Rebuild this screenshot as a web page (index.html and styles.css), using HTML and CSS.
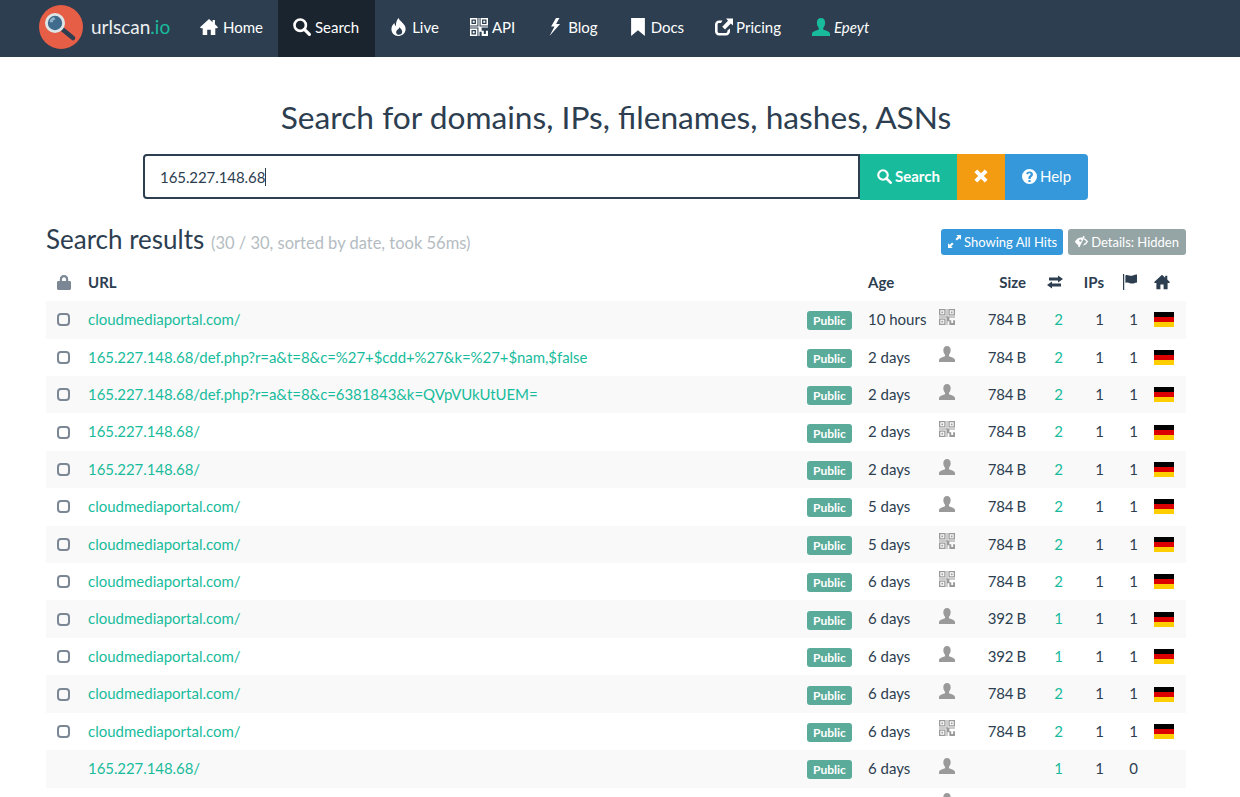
FILE: index.html
```html
<!DOCTYPE html>
<html lang="en">
<head>
  <meta charset="UTF-8">
  <meta name="viewport" content="width=device-width, initial-scale=1.0">
  <link rel="stylesheet" href="styles.css">
  <title>urlscan.io - Search</title>
</head>
<body>

  <svg class="sprite" xmlns="http://www.w3.org/2000/svg">
    <symbol id="i-home" viewBox="0 0 20 18"><path d="M10 0 L14 3.6 V1.2 H16.6 V6 L20 9.2 L19 10.4 H17 V18 H12 V12 H8 V18 H3 V10.4 H1 L0 9.2 Z"/></symbol>
    <symbol id="i-search" viewBox="0 0 18 18"><circle cx="7.2" cy="7.2" r="5.7" fill="none" stroke="currentColor" stroke-width="2.6"/><path d="M11.4 11.4 L16.4 16.4" fill="none" stroke="currentColor" stroke-width="3.2" stroke-linecap="round"/></symbol>
    <symbol id="i-fire" viewBox="0 0 16 19"><path fill-rule="evenodd" d="M7.5 0 C8.5 3 12 4.5 14 8 C16.5 12.5 14 18 8.5 19 C3.5 19.3 0 16 0 11.8 C0 9 1.6 7 3.2 5.4 C3.3 7 3.8 8 4.8 8.6 C4.6 5 5.6 2.2 7.5 0 Z M8.4 9.6 C8.6 11.4 5 12.6 5 15 C5 16.8 6.5 17.8 8 17.8 C10 17.8 11.4 16.4 11.4 14.6 C11.4 12.6 9.6 11.4 8.4 9.6 Z"/></symbol>
    <symbol id="i-qr" viewBox="0 0 17 17"><path fill-rule="evenodd" d="M0 0 H7 V7 H0 Z M1.4 1.4 V5.6 H5.6 V1.4 Z M2.6 2.6 H4.4 V4.4 H2.6 Z M10 0 H17 V7 H10 Z M11.4 1.4 V5.6 H15.6 V1.4 Z M12.6 2.6 H14.4 V4.4 H12.6 Z M0 10 H7 V17 H0 Z M1.4 11.4 V15.6 H5.6 V11.4 Z M2.6 12.6 H4.4 V14.4 H2.6 Z M8 0 H9 V8 H0 V9 H8 V17 H9 V13 H11 V17 H17 V12 H15 V15 H13 V12 H11 V9 H17 V8 H8 Z"/></symbol>
    <symbol id="i-bolt" viewBox="0 0 11 18"><path d="M6.5 0 L1.6 8.4 H5 L0 18 L10.6 6 H6.6 L10 0 Z"/></symbol>
    <symbol id="i-bookmark" viewBox="0 0 13 17"><path d="M0 0 H13 V17 L6.5 11.6 L0 17 Z"/></symbol>
    <symbol id="i-share" viewBox="0 0 18 17"><path d="M7.5 2 H4 C1.8 2 0 3.8 0 6 V13 C0 15.2 1.8 17 4 17 H11 C13.2 17 15 15.2 15 13 V10 L12.4 12 V13 C12.4 13.8 11.8 14.4 11 14.4 H4 C3.2 14.4 2.6 13.8 2.6 13 V6 C2.6 5.2 3.2 4.6 4 4.6 H6 Z"/><path d="M11 0 H18 V7 L15.8 5 L10 11 L7.2 8.2 L13 2.2 Z"/></symbol>
    <symbol id="i-user" viewBox="0 0 17 17"><path d="M8.5 0 C11 0 12.4 1.8 12.4 4.4 C12.4 6.6 11.4 8.4 10.6 9.4 V10.8 C13 11.8 17 12.6 17 15 V17 H0 V15 C0 12.6 4 11.8 6.4 10.8 V9.4 C5.6 8.4 4.6 6.6 4.6 4.4 C4.6 1.8 6 0 8.5 0 Z"/></symbol>
    <symbol id="i-times" viewBox="0 0 13 13"><path d="M3 0.4 L6.5 3.9 L10 0.4 L12.6 3 L9.1 6.5 L12.6 10 L10 12.6 L6.5 9.1 L3 12.6 L0.4 10 L3.9 6.5 L0.4 3 Z"/></symbol>
    <symbol id="i-help" viewBox="0 0 15 15"><path fill-rule="evenodd" d="M7.5 0 A7.5 7.5 0 1 1 7.5 15 A7.5 7.5 0 1 1 7.5 0 Z M6.4 11 V13 H8.6 V11 Z M7.6 2.4 C5.8 2.4 4.6 3.3 4.1 4.6 L5.8 5.4 C6.1 4.7 6.6 4.3 7.4 4.3 C8.2 4.3 8.7 4.7 8.7 5.2 C8.7 6.4 6.4 6.6 6.4 8.8 V10 H8.6 V9.2 C8.6 8.2 11 7.6 11 5.2 C11 3.5 9.4 2.4 7.6 2.4 Z"/></symbol>
    <symbol id="i-expand" viewBox="0 0 14 14"><path d="M9 0 H14 V5 L12.2 3.4 L9.6 6 L8 4.4 L10.6 1.8 Z M5 14 H0 V9 L1.8 10.6 L4.4 8 L6 9.6 L3.4 12.2 Z"/></symbol>
    <symbol id="i-eye" viewBox="0 0 16 14"><path fill-rule="evenodd" d="M10.2 0 L12 1 L5.4 14 L3.6 13 L4.3 11.6 C2.4 10.6 0.9 9 0 7 C1.6 4 4.6 2 8 2 C8.5 2 9 2 9.4 2.1 Z M6.6 4.4 A1.5 1.5 0 1 0 6.6 7.4 A1.5 1.5 0 1 0 6.6 4.4 Z M11.6 2.9 C13.4 3.8 15 5.2 16 7 C14.8 9.6 12.6 11.4 10 11.9 L10.9 10 C12.2 9.4 13.2 8.2 14 7 C13.2 5.8 12 4.8 10.8 4.4 Z"/></symbol>
    <symbol id="i-lock" viewBox="0 0 14 15"><path fill-rule="evenodd" d="M7 0 C9.6 0 11.2 1.8 11.2 4.2 V6 H12.6 C13.4 6 14 6.6 14 7.4 V13.6 C14 14.4 13.4 15 12.6 15 H1.4 C0.6 15 0 14.4 0 13.6 V7.4 C0 6.6 0.6 6 1.4 6 H2.8 V4.2 C2.8 1.8 4.4 0 7 0 Z M7 2.2 C5.6 2.2 5 3.2 5 4.4 V6 H9 V4.4 C9 3.2 8.4 2.2 7 2.2 Z"/></symbol>
    <symbol id="i-exchange" viewBox="0 0 16 13"><path d="M2 2 H11 V0 L16 3.5 L11 7 V5 H2 Z M14 8 H5 V6 L0 9.5 L5 13 V11 H14 Z"/></symbol>
    <symbol id="i-flag" viewBox="0 0 14 16"><path d="M0 0 H1.2 V16 H0 Z M2.4 1.4 C5 0 7 2.8 10 1.4 C11.4 0.8 13 0.4 14 0.4 V8.4 C11.4 8.6 10 10 7.6 9.4 C5.6 8.8 4 8 2.4 9 Z"/></symbol>
    <symbol id="i-de" viewBox="0 0 20 15"><rect width="20" height="5" y="0" fill="#000"/><rect width="20" height="5" y="5" fill="#d00"/><rect width="20" height="5" y="10" fill="#ffce00"/></symbol>
  </svg>

  <nav class="navbar">
    <a class="brand" href="#">
      <svg class="logo" viewBox="0 0 44 44">
        <circle cx="22" cy="22" r="22" fill="#e55e45"/>
        <path d="M23 24 L34 33" stroke="#2c3e50" stroke-width="4.5" stroke-linecap="round"/>
        <circle cx="16" cy="18" r="10" fill="#dfe6e8"/>
        <circle cx="16" cy="18" r="7.2" fill="#3f6b8c"/>
        <path d="M10.5 17 A6 6 0 0 1 15 12 L16.5 14.6 A3.6 3.6 0 0 0 13.4 17.4 Z" fill="#8fb2c9"/>
      </svg>
      <span>urlscan<span class="brand-io">.io</span></span>
    </a>
    <a class="nav-item nav-home" href="#"><svg class="nav-icon"><use href="#i-home"/></svg>Home</a>
    <a class="nav-item active" href="#"><svg class="nav-icon"><use href="#i-search"/></svg>Search</a>
    <a class="nav-item" href="#"><svg class="nav-icon"><use href="#i-fire"/></svg>Live</a>
    <a class="nav-item" href="#"><svg class="nav-icon"><use href="#i-qr"/></svg>API</a>
    <a class="nav-item" href="#"><svg class="nav-icon"><use href="#i-bolt"/></svg>Blog</a>
    <a class="nav-item" href="#"><svg class="nav-icon"><use href="#i-bookmark"/></svg>Docs</a>
    <a class="nav-item nav-pricing" href="#"><svg class="nav-icon"><use href="#i-share"/></svg>Pricing</a>
    <a class="nav-item nav-user" href="#"><svg class="nav-icon"><use href="#i-user"/></svg><em>Epeyt</em></a>
  </nav>

  <main class="container">
    <h2 class="search-title">Search for domains, IPs, filenames, hashes, ASNs</h2>

    <form class="search-form">
      <div class="input-wrap">
        <input class="search-input" type="text" value="165.227.148.68">
        <span class="caret"></span>
      </div>
      <button class="btn btn-green" type="button"><svg class="btn-icon"><use href="#i-search"/></svg>Search</button>
      <button class="btn btn-orange" type="button"><svg class="btn-icon-x"><use href="#i-times"/></svg></button>
      <button class="btn btn-blue btn-last" type="button"><svg class="btn-icon"><use href="#i-help"/></svg>Help</button>
    </form>

    <div class="results-head">
      <h3 class="results-title">Search results <small>(30 / 30, sorted by date, took 56ms)</small></h3>
      <div class="results-actions">
        <a class="btn-sm btn-blue btn-hits" href="#"><svg class="sm-icon"><use href="#i-expand"/></svg>Showing All Hits</a>
        <a class="btn-sm btn-grey" href="#"><svg class="sm-icon"><use href="#i-eye"/></svg>Details: Hidden</a>
      </div>
    </div>

    <table class="results">
      <colgroup>
        <col class="c-lock"><col class="c-url"><col class="c-age"><col class="c-kind"><col class="c-size"><col class="c-req"><col class="c-ips"><col class="c-cty"><col class="c-home">
      </colgroup>
      <thead>
        <tr>
          <th><svg class="ic-lock"><use href="#i-lock"/></svg></th>
          <th>URL</th>
          <th>Age</th>
          <th></th>
          <th class="num">Size</th>
          <th class="num"><svg class="ic-head"><use href="#i-exchange"/></svg></th>
          <th class="num">IPs</th>
          <th class="num"><svg class="ic-head"><use href="#i-flag"/></svg></th>
          <th><svg class="ic-head"><use href="#i-home"/></svg></th>
        </tr>
      </thead>
      <tbody id="rows"></tbody>
    </table>
  </main>

  <script>
    const filas = [
      ['cloudmediaportal.com/', '10 hours', 'qr', '784 B', 2, 1, 1],
      ['165.227.148.68/def.php?r=a&t=8&c=%27+$cdd+%27&k=%27+$nam,$false', '2 days', 'user', '784 B', 2, 1, 1],
      ['165.227.148.68/def.php?r=a&t=8&c=6381843&k=QVpVUkUtUEM=', '2 days', 'user', '784 B', 2, 1, 1],
      ['165.227.148.68/', '2 days', 'qr', '784 B', 2, 1, 1],
      ['165.227.148.68/', '2 days', 'user', '784 B', 2, 1, 1],
      ['cloudmediaportal.com/', '5 days', 'user', '784 B', 2, 1, 1],
      ['cloudmediaportal.com/', '5 days', 'qr', '784 B', 2, 1, 1],
      ['cloudmediaportal.com/', '6 days', 'qr', '784 B', 2, 1, 1],
      ['cloudmediaportal.com/', '6 days', 'user', '392 B', 1, 1, 1],
      ['cloudmediaportal.com/', '6 days', 'user', '392 B', 1, 1, 1],
      ['cloudmediaportal.com/', '6 days', 'user', '784 B', 2, 1, 1],
      ['cloudmediaportal.com/', '6 days', 'qr', '784 B', 2, 1, 1],
      ['165.227.148.68/', '6 days', 'user', '', 1, 1, 0],
      ['', '', 'user', '', '', '', '']
    ];

    function crearFila(f) {
      const hayDatos = f[3] !== '';
      const tr = document.createElement('tr');
      tr.innerHTML =
        '<td>' + (hayDatos ? '<span class="check"></span>' : '') + '</td>' +
        '<td><div class="url-cell"><a class="url"></a>' + (f[0] ? '<span class="badge">Public</span>' : '') + '</div></td>' +
        '<td>' + f[1] + '</td>' +
        '<td><svg class="ic-kind"><use href="#i-' + f[2] + '"/></svg></td>' +
        '<td class="num size">' + f[3] + '</td>' +
        '<td class="num link-num">' + f[4] + '</td>' +
        '<td class="num">' + f[5] + '</td>' +
        '<td class="num">' + f[6] + '</td>' +
        '<td>' + (hayDatos ? '<svg class="ic-de"><use href="#i-de"/></svg>' : '') + '</td>';
      const enlace = tr.querySelector('.url');
      enlace.textContent = f[0];
      if (/^\d/.test(f[0])) enlace.classList.add('url-ip');
      return tr;
    }

    const cuerpo = document.getElementById('rows');
    filas.forEach(function(f) { cuerpo.appendChild(crearFila(f)); });
  </script>
</body>
</html>
```

FILE: styles.css
```css
body {
  margin: 0;
  font-family: Lato, "Noto Sans", Arial, sans-serif;
  font-size: 15px;
  line-height: 1.42857;
  color: #2c3e50;
  background: #fff;
}

a {
  text-decoration: none;
}

.sprite {
  display: none;
}

.navbar {
  display: flex;
  height: 57px;
  padding-left: 39px;
  background-color: #2c3e50;
  color: #fff;
}

.brand {
  display: flex;
  align-items: center;
  gap: 8px;
  width: 146px;
  padding-bottom: 3px;
  color: #ecf0f1;
  font-size: 19px;
}

.brand-io {
  color: #18bc9c;
}

.logo {
  width: 44px;
  height: 44px;
}

.nav-item {
  display: flex;
  align-items: center;
  gap: 4px;
  padding: 0 16px 1px 15px;
  color: #fff;
  font-size: 15px;
}

.nav-item.active {
  background-color: #1a242f;
}

.nav-icon {
  width: 18px;
  height: 18px;
  margin-top: -2px;
  fill: currentColor;
}

.nav-home {
  gap: 5px;
  padding-right: 15px;
}

.nav-pricing {
  gap: 3px;
}

.nav-user .nav-icon {
  fill: #18bc9c;
}

.container {
  width: 1140px;
  margin-left: 46px;
}

.search-title {
  margin: 41px 0 0;
  font-size: 31.7px;
  font-weight: 400;
  line-height: 38px;
  text-align: center;
}

.search-form {
  display: flex;
  height: 46px;
  margin: 18px 0 0 97px;
}

.input-wrap {
  position: relative;
  width: 717px;
  height: 45px;
}

.search-input {
  width: 100%;
  height: 100%;
  padding: 1px 15px 0;
  box-sizing: border-box;
  border: 2px solid #2c3e50;
  border-radius: 4px 0 0 4px;
  outline: none;
  font-family: inherit;
  font-size: 15px;
  letter-spacing: -0.07px;
  color: #2c3e50;
}

.caret {
  position: absolute;
  left: 122px;
  top: 14px;
  width: 1px;
  height: 18px;
  background-color: #2c3e50;
}

.btn {
  display: flex;
  align-items: center;
  justify-content: center;
  gap: 3px;
  border: none;
  padding: 0 0 2px;
  color: #fff;
  font-family: inherit;
  font-size: 15px;
}

.btn-green {
  width: 97px;
  background-color: #18bc9c;
  font-weight: 700;
}

.btn-orange {
  width: 48px;
  background-color: #f39c12;
}

.btn-blue {
  background-color: #3498db;
}

.btn-last {
  width: 83px;
  border-radius: 0 4px 4px 0;
}

.btn-icon {
  width: 15px;
  height: 15px;
  fill: currentColor;
}

.btn-icon-x {
  width: 14px;
  height: 14px;
  fill: currentColor;
}

.results-head {
  display: flex;
  justify-content: space-between;
  align-items: center;
  margin-top: 20px;
  height: 43.7px;
}

.results-title {
  margin: 0 0 1px;
  font-size: 26px;
  font-weight: 400;
  line-height: 30px;
}

.results-title small {
  font-size: 16.5px;
  color: #b4bcc2;
}

.results-actions {
  display: flex;
  gap: 5px;
}

.btn-sm {
  display: flex;
  align-items: center;
  gap: 3px;
  height: 26px;
  padding: 0 7px;
  border-radius: 3px;
  color: #fff;
  font-size: 13px;
}

.btn-hits {
  padding-right: 6px;
}

.btn-grey {
  background-color: #95a5a6;
}

.sm-icon {
  width: 13px;
  height: 13px;
  fill: currentColor;
}

.results {
  width: 1140px;
  table-layout: fixed;
  border-collapse: collapse;
}

.c-lock { width: 34px; }
.c-url { width: 780px; }
.c-age { width: 71px; }
.c-kind { width: 34px; }
.c-size { width: 69px; }
.c-req { width: 37px; }
.c-ips { width: 41px; }
.c-cty { width: 34px; }
.c-home { width: 40px; }

.results th,
.results td {
  padding: 8px;
  text-align: left;
  white-space: nowrap;
}

.results .num {
  text-align: right;
}

.results .size {
  letter-spacing: -0.3px;
}

.results tbody tr:nth-child(odd) {
  background-color: #f9f9f9;
}

.url-cell {
  display: flex;
  justify-content: space-between;
  align-items: center;
}

.url {
  color: #18bc9c;
}

.url-ip {
  letter-spacing: -0.07px;
}

.badge {
  display: block;
  width: 45px;
  height: 19px;
  margin-top: 2px;
  border-radius: 3px;
  background-color: #5aab99;
  color: #fff;
  font-size: 12px;
  font-weight: 700;
  line-height: 19px;
  text-align: center;
}

.link-num {
  color: #18bc9c;
}

.check {
  display: block;
  width: 9px;
  height: 9px;
  margin-left: 3px;
  border: 2.3px solid #7b8794;
  border-radius: 4px;
}

.ic-lock {
  display: block;
  width: 14px;
  height: 15px;
  margin-left: 3px;
  fill: #7b8794;
}

.ic-head {
  width: 16px;
  height: 16px;
  fill: #2c3e50;
  vertical-align: -2px;
}

.ic-kind {
  display: block;
  width: 16px;
  height: 16px;
  margin: -3px 0 3px 0;
  fill: #9a9a9a;
}

.ic-de {
  display: block;
  width: 20px;
  height: 15px;
}
```
